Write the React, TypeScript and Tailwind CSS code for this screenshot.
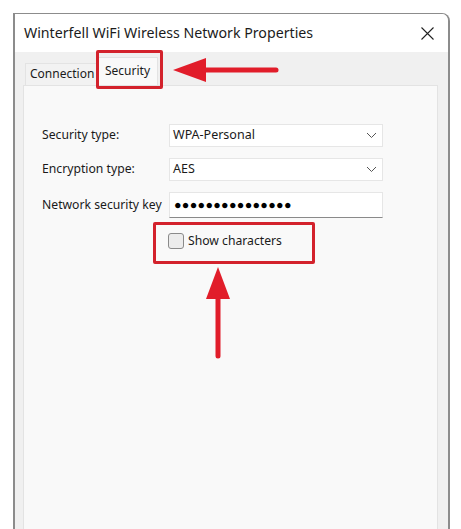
import React from 'react';

const font = { fontFamily: '"Noto Sans", "Open Sans", sans-serif' };

function Chevron() {
  return (
    <svg width="11" height="7" viewBox="0 0 11 7" className="text-[#555]">
      <path d="M1 1l4.5 4.5L10 1" fill="none" stroke="currentColor" strokeWidth="1" />
    </svg>
  );
}

function Select({ value }: { value: string }) {
  return (
    <div className="flex h-[23px] w-[214px] items-center justify-between border border-[#e6e6e6] bg-white pl-[3px] pr-[5px] text-[12.5px] text-[#1a1a1a]">
      <span>{value}</span>
      <Chevron />
    </div>
  );
}

export default function App() {
  return (
    <div className="relative h-[529px] w-[461px] overflow-hidden bg-white" style={font}>
      <div className="ml-[13px] mt-[13px] flex h-[530px] w-[437px] flex-col overflow-hidden rounded-tr-[8px] border-x-2 border-t border-[#8c8c8c]">
        {/* title bar */}
        <div className="flex h-[38px] shrink-0 items-center justify-between bg-white pl-[9px] pr-[14px]">
          <span className="whitespace-nowrap text-[14.2px] text-[#1b1b1b]">Winterfell WiFi Wireless Network Properties</span>
          <svg width="13" height="13" viewBox="0 0 13 13">
            <path d="M0.5 0.5l12 12M12.5 0.5l-12 12" stroke="#222" strokeWidth="1.1" />
          </svg>
        </div>

        {/* body */}
        <div className="flex flex-1 flex-col bg-[#f0f0f0] pl-[8px] pr-[10px]">
          <div className="flex h-[33px] items-end pl-[2px]">
            <div className="h-[22px] w-[72px] whitespace-nowrap border border-b-0 border-[#e3e3e3] bg-[#f2f2f2] pl-[4px] pt-[2px] text-[12px] leading-[16px] text-[#1a1a1a]">
              Connection
            </div>
            <div className="h-[28px] w-[61px] border border-b-0 border-[#e3e3e3] bg-[#f9f9f9] pl-[7px] pt-[5px] text-[12px] leading-[16px] text-[#1a1a1a]">
              Security
            </div>
          </div>
          <div className="flex-1 border border-[#e3e3e3] bg-[#f9f9f9] pl-[18px] pt-[38px]">
            <div className="flex flex-col gap-[11px] text-[12.2px] text-[#1a1a1a]">
              <div className="flex items-center">
                <span className="w-[127px] whitespace-nowrap">Security type:</span>
                <Select value="WPA-Personal" />
              </div>
              <div className="flex items-center">
                <span className="w-[127px] whitespace-nowrap">Encryption type:</span>
                <Select value="AES" />
              </div>
              <div className="flex items-center">
                <span className="w-[127px] whitespace-nowrap">Network security key</span>
                <div className="flex h-[26px] w-[214px] items-center border border-[#e6e6e6] border-b-[#8a8a8a] bg-white pl-[4px] text-[12.5px] tracking-[0.3px] text-black">
                  ●●●●●●●●●●●●●●●
                </div>
              </div>
            </div>
            <div className="ml-[126px] mt-[14px] flex items-center gap-[4px] text-[12.2px] text-[#1a1a1a]">
              <div className="h-[16px] w-[16px] rounded-[3px] border border-[#8a8a8a] bg-[#ececec]" />
              <span>Show characters</span>
            </div>
          </div>
        </div>
      </div>

      {/* annotations */}
      <div className="absolute left-[96px] top-[50px] h-[39px] w-[67px] rounded-[2px] border-[3px] border-[#d3222c]" />
      <div className="absolute left-[153px] top-[222px] h-[42px] w-[162px] rounded-[2px] border-[3px] border-[#d3222c]" />
      <svg className="absolute left-[170px] top-[55px]" width="112" height="30" viewBox="0 0 112 30">
        <path d="M3 15L36 3V27Z" fill="#e11d2a" />
        <path d="M34 15H106" stroke="#e11d2a" strokeWidth="5" strokeLinecap="round" />
      </svg>
      <svg className="absolute left-[202px] top-[265px]" width="32" height="96" viewBox="0 0 32 96">
        <path d="M16 2L28 34H4Z" fill="#e11d2a" />
        <path d="M16 32V91" stroke="#e11d2a" strokeWidth="5" strokeLinecap="round" />
      </svg>
    </div>
  );
}
